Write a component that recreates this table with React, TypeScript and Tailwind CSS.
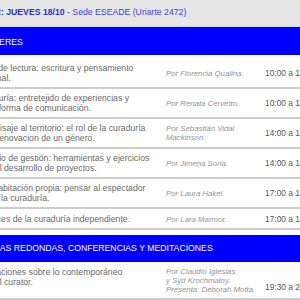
import React from "react";
import clsx from "clsx";

interface Item {
  desc: string[];
  by: string[];
  time: string;
  pad: string;
  top?: boolean;
  timeClass?: string;
}

const talleres: Item[] = [
  {
    desc: ["Taller de lectura: escritura y pensamiento", "personal."],
    by: ["Por Florencia Qualina."],
    time: "10:00 a 12:00",
    pad: "pt-[8px] pb-[4px]",
  },
  {
    desc: ["Curaduría: entretejido de experiencias y", "como forma de comunicación."],
    by: ["Por Renata Cervetto."],
    time: "10:00 a 12:00",
    pad: "pt-[4px] pb-[4px]",
  },
  {
    desc: ["Del paisaje al territorio: el rol de la curaduría", "en la renovacion de un género."],
    by: ["Por Sebastián Vidal", "Mackinson."],
    time: "14:00 a 16:00",
    pad: "pt-[4px] pb-[4px]",
  },
  {
    desc: ["Espacio de gestión: herramientas y ejercicios", "para el desarrollo de proyectos."],
    by: ["Por Jimena Soria."],
    time: "14:00 a 16:00",
    pad: "pt-[4px] pb-[4px]",
  },
  {
    desc: ["Una habitación propia: pensar al espectador", "desde la curaduría."],
    by: ["Por Laura Hakel."],
    time: "17:00 a 19:00",
    pad: "pt-[4px] pb-[4px]",
  },
  {
    desc: ["Alcances de la curaduría independiente."],
    by: ["Por Lara Marmor."],
    time: "17:00 a 19:00",
    pad: "pt-[5px] pb-[4px]",
  },
];

const mesas: Item[] = [
  {
    desc: ["Meditaciones sobre lo contemporáneo", "para el curator."],
    by: ["Por Claudio Iglesias", "y Syd Krochmalny.", "Presenta: Deborah Motta."],
    time: "19:30 a 21:00",
    pad: "pt-[5px] pb-[4px]",
    top: true,
    timeClass: "pt-[15px]",
  },
];

const Row: React.FC<{ item: Item }> = ({ item }) => (
  <div
    className={clsx(
      "grid grid-cols-[191px_99px_90px] border-b-2 border-[#cdcdcd]",
      item.pad,
      item.top ? "items-start" : "items-center"
    )}
  >
    <div className="pl-[5px] text-[8.7px] leading-[10px] text-[#6a6a6a] whitespace-nowrap">
      {item.desc.map((l) => (
        <div key={l}>{l}</div>
      ))}
    </div>
    <div className="pl-[5px] text-[7.8px] leading-[9px] italic text-[#939393] whitespace-nowrap">
      {item.by.map((l) => (
        <div key={l}>{l}</div>
      ))}
    </div>
    <div
      className={clsx(
        "pl-[5px] text-[8.4px] leading-[10px] text-[#575757] whitespace-nowrap",
        item.timeClass
      )}
    >
      {item.time}
    </div>
  </div>
);

export default function App() {
  return (
    <div className="w-[300px] h-[300px] overflow-hidden bg-white font-['Liberation_Sans',Arial,sans-serif]">
      <div className="ml-[-30px] w-[380px]">
        {/* day header */}
        <div className="h-[27px] flex items-center pl-[9px] bg-[#e6e6e6] border-b border-[#d2d2d2] text-[8.7px] whitespace-nowrap">
          <span className="font-bold text-[#2e2ecc]">DÍA 2: JUEVES 18/10</span>
          <span className="text-[#4242e0]">&nbsp;- Sede ESEADE (Uriarte 2472)</span>
        </div>

        <div className="h-[28px] flex items-center pt-[3px] pl-[9px] bg-[#0000ff] text-white text-[8.7px] whitespace-nowrap">
          TALLERES
        </div>
        {talleres.map((t) => (
          <Row key={t.desc[0]} item={t} />
        ))}

        <div className="mt-[5px] h-[27px] flex items-center pl-[11px] bg-[#0000ff] text-white text-[8.7px] whitespace-nowrap">
          MESAS REDONDAS, CONFERENCIAS Y MEDITACIONES
        </div>
        {mesas.map((t) => (
          <Row key={t.desc[0]} item={t} />
        ))}
      </div>
    </div>
  );
}
